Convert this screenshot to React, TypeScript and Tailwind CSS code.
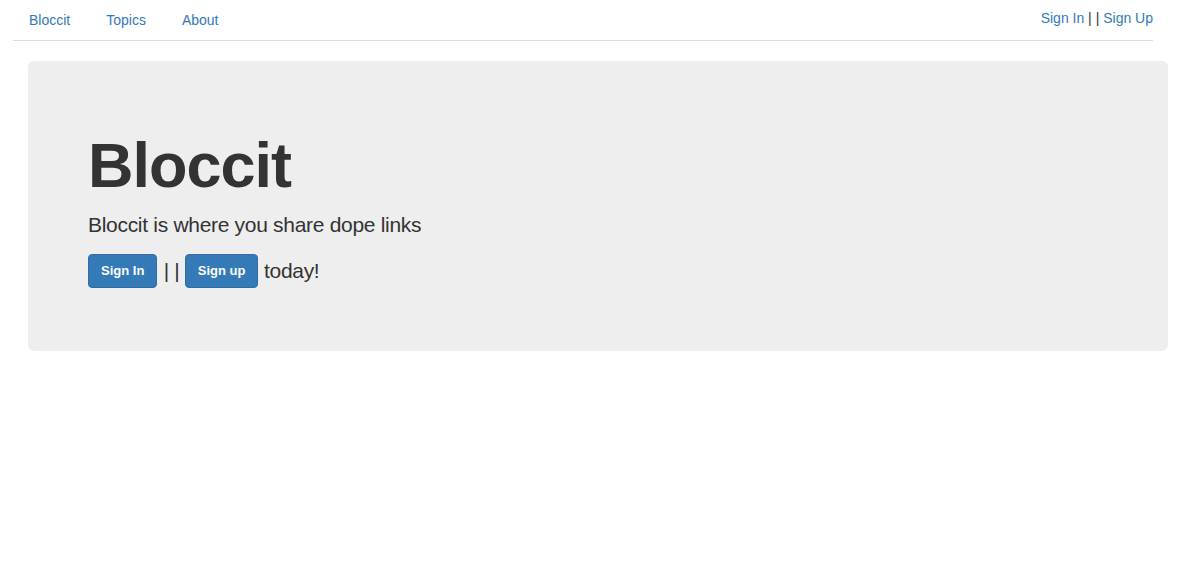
export default function App() {
    return (
        <div className="min-h-[581px] bg-white text-[#333] text-[14px] leading-[20px]" style={{ fontFamily: '"Liberation Sans", Arial, sans-serif' }}>
            {/* Top nav */}
            <div className="ml-[13px] w-[1140px] h-[41px] border-b border-[#ddd] flex justify-between">
                <ul className="flex gap-[6px] ml-px">
                    <li><a href="#" className="block px-[15px] py-[10px] text-[#337ab7]">Bloccit</a></li>
                    <li><a href="#" className="block px-[15px] py-[10px] text-[#337ab7]">Topics</a></li>
                    <li><a href="#" className="block px-[15px] py-[10px] text-[#337ab7]">About</a></li>
                </ul>
                <div className="pt-[8px]">
                    <a href="#" className="text-[#337ab7]">Sign In</a> | | <a href="#" className="text-[#337ab7]">Sign Up</a>
                </div>
            </div>

            {/* Jumbotron */}
            <div className="mt-[20px] ml-[28px] w-[1140px] h-[290px] bg-[#eee] rounded-[6px] px-[60px] py-[48px]">
                <h1 className="mt-[22px] mb-[10px] text-[63px] leading-[1.1] font-bold tracking-[-1px] text-[#333]">Bloccit</h1>
                <p className="text-[21px] leading-[30px] mb-[14px] tracking-[-0.3px]">Bloccit is where you share dope links</p>
                <p className="text-[21px] leading-[34px] flex items-center whitespace-pre">
                    <a href="#" className="inline-block h-[34px] px-[12px] py-[6px] text-[13px] leading-[20px] font-bold text-white bg-[#337ab7] border border-[#2e6da4] rounded-[4px]">Sign In</a>
                    <span className="pl-[1px] tracking-[-0.4px]"> | | </span>
                    <a href="#" className="inline-block h-[34px] px-[12px] py-[6px] text-[13px] leading-[20px] font-bold text-white bg-[#337ab7] border border-[#2e6da4] rounded-[4px]">Sign up</a>
                    <span className="tracking-[-0.3px]"> today!</span>
                </p>
            </div>
        </div>
    );
}
